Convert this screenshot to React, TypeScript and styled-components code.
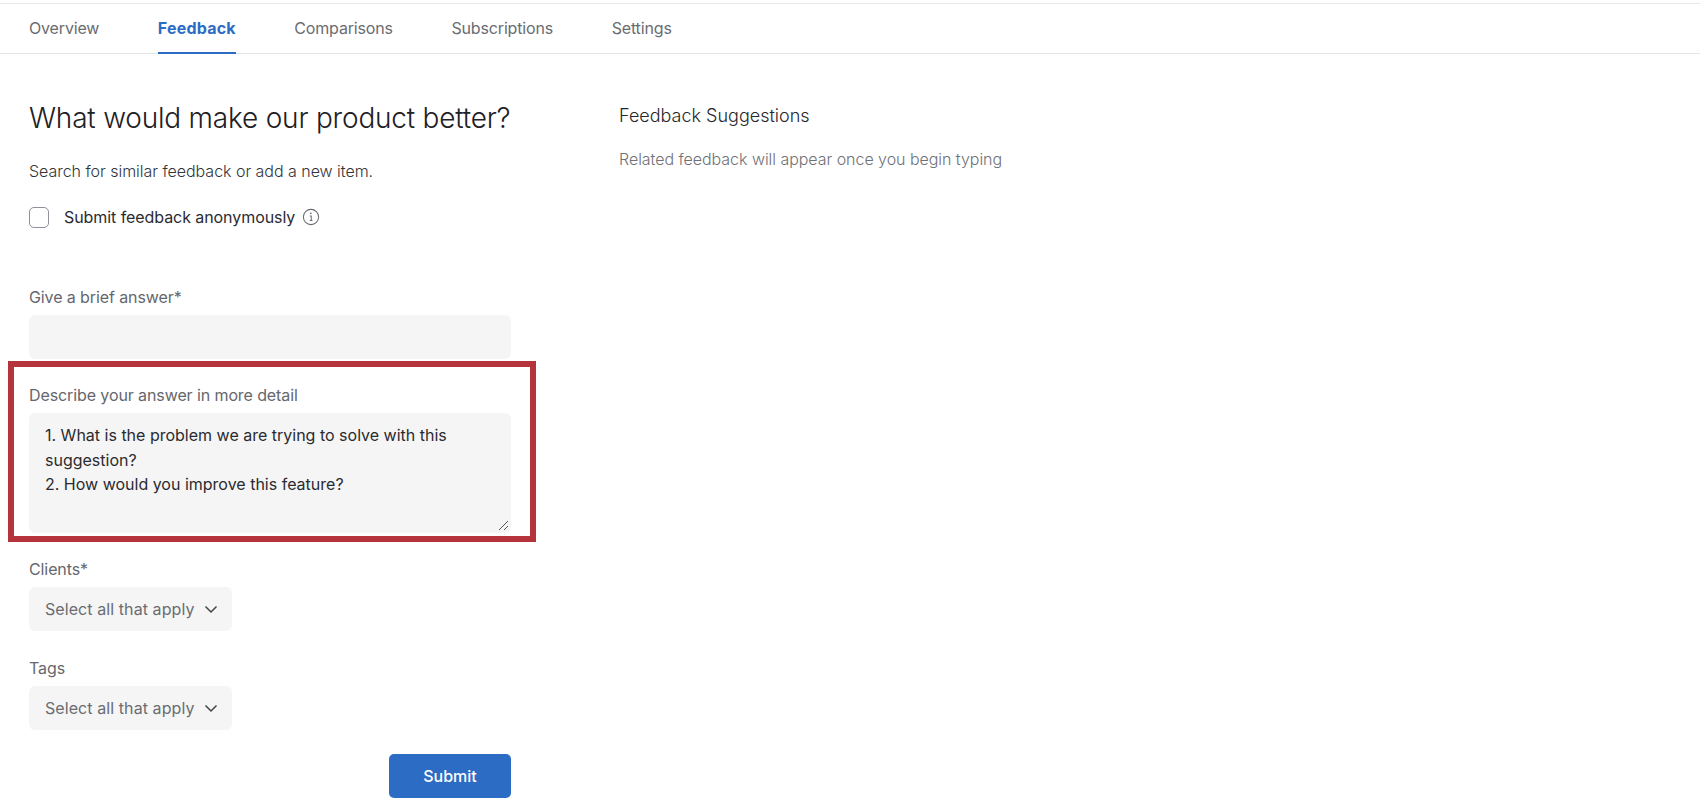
import * as React from 'react'
import styled, { createGlobalStyle } from 'styled-components'

const GlobalStyle = createGlobalStyle`
  html, body {
    margin: 0;
    padding: 0;
    background: #fff;
    font-family: 'Inter', 'Noto Sans', sans-serif;
  }
  * { box-sizing: border-box; }
`

const Page = styled.div`
  width: 1700px;
  height: 808px;
  overflow: hidden;
  padding-top: 3px;
`

const Tabs = styled.nav`
  display: flex;
  gap: 58.5px;
  height: 51px;
  padding-left: 29px;
  border-top: 1px solid #e8e8e8;
  border-bottom: 1px solid #e3e4e6;
`

const Tab = styled.a<{ $active?: boolean }>`
  display: block;
  height: 50px;
  padding-top: 14px;
  font-size: 16px;
  line-height: 20px;
  letter-spacing: ${p => (p.$active ? '0.2px' : '-0.15px')};
  font-weight: ${p => (p.$active ? 700 : 400)};
  color: ${p => (p.$active ? '#2d6cc4' : '#6a6c72')};
  border-bottom: 2px solid ${p => (p.$active ? '#2d6cc4' : 'transparent')};
`

const Columns = styled.main`
  display: flex;
  padding: 0 0 0 29px;
`

const FormColumn = styled.section`
  width: 482px;
  margin-right: 108px;
  padding-top: 46px;
`

const SideColumn = styled.aside`
  padding-top: 50px;
`

const Heading = styled.h1`
  margin: 0;
  font-size: 28px;
  line-height: 36px;
  font-weight: 300;
  letter-spacing: -0.2px;
  color: #1f2024;
  white-space: nowrap;
`

const Intro = styled.p`
  margin: 24px 0 0;
  font-size: 16px;
  line-height: 22px;
  letter-spacing: -0.03px;
  font-weight: 300;
  color: #32343a;
`

const CheckRow = styled.label`
  display: flex;
  align-items: center;
  margin-top: 24px;
  height: 22px;
  font-size: 16px;
  letter-spacing: -0.07px;
  color: #2a2b30;
`

const Checkbox = styled.span`
  width: 20px;
  height: 21px;
  margin-right: 15px;
  border: 1.5px solid #8e9199;
  border-radius: 5px;
`

const InfoIcon = styled.svg`
  margin-left: 7px;
  width: 18px;
  height: 18px;
`

const Field = styled.div<{ $top: number }>`
  position: relative;
  margin-top: ${p => p.$top}px;
`

const Label = styled.div`
  font-size: 16px;
  line-height: 20px;
  letter-spacing: -0.1px;
  color: #65676d;
  margin-bottom: 8px;
`

const TextInput = styled.div`
  height: 44px;
  background: #f5f5f5;
  border-radius: 6px;
`

const TextArea = styled.div`
  position: relative;
  height: 120px;
  padding: 10px 16px;
  background: #f5f5f5;
  border-radius: 6px;
  font-size: 16px;
  line-height: 24.5px;
  letter-spacing: 0;
  color: #2a2b30;
  white-space: pre-line;
`

const Grip = styled.svg`
  position: absolute;
  right: 2px;
  bottom: 2px;
  width: 11px;
  height: 11px;
`

// red annotation drawn on top of the screenshot
const Highlight = styled.div`
  position: absolute;
  left: -21px;
  right: -25px;
  top: -24px;
  bottom: -9px;
  border: 6px solid #b5333a;
  pointer-events: none;
`

const Select = styled.div`
  display: inline-flex;
  align-items: center;
  width: 203px;
  height: 44px;
  padding: 0 14px 0 16px;
  background: #f5f5f5;
  border-radius: 6px;
  font-size: 16px;
  letter-spacing: 0.08px;
  color: #6a6c72;
  white-space: nowrap;
  justify-content: space-between;
`

const Actions = styled.div`
  display: flex;
  justify-content: flex-end;
  margin-top: 24px;
`

const SubmitButton = styled.button`
  width: 122px;
  height: 44px;
  border: 0;
  border-radius: 5px;
  background: #2d6cc4;
  color: #fff;
  font: 500 16px 'Inter', sans-serif;
  letter-spacing: 0;
`

const SideTitle = styled.h2`
  margin: 0;
  font-size: 18px;
  line-height: 24px;
  font-weight: 300;
  letter-spacing: 0;
  color: #26272b;
`

const SideHint = styled.p`
  margin: 20px 0 0;
  font-size: 16px;
  line-height: 22px;
  font-weight: 300;
  letter-spacing: -0.04px;
  color: #6f7177;
`

const Chevron = () => (
  <svg width="14" height="14" viewBox="0 0 14 14" fill="none">
    <path d="M1.5 4.5 7 10l5.5-5.5" stroke="#404247" strokeWidth="1.5" />
  </svg>
)

const tabs = ['Overview', 'Feedback', 'Comparisons', 'Subscriptions', 'Settings']

export default function App() {
  return (
    <Page>
      <GlobalStyle />
      <Tabs>
        {tabs.map(t => (
          <Tab key={t} $active={t === 'Feedback'}>
            {t}
          </Tab>
        ))}
      </Tabs>
      <Columns>
        <FormColumn>
          <Heading>What would make our product better?</Heading>
          <Intro>Search for similar feedback or add a new item.</Intro>
          <CheckRow>
            <Checkbox />
            Submit feedback anonymously
            <InfoIcon viewBox="0 0 17 17" fill="none">
              <circle cx="8.5" cy="8.5" r="7.2" stroke="#6a6c72" />
              <path d="M7.4 7.6h1.3v4M7.3 11.8h2.6" stroke="#6a6c72" />
              <circle cx="8.4" cy="5" r=".8" fill="#6a6c72" />
            </InfoIcon>
          </CheckRow>
          <Field $top={59}>
            <Label>Give a brief answer*</Label>
            <TextInput />
          </Field>
          <Field $top={26}>
            <Highlight />
            <Label>Describe your answer in more detail</Label>
            <TextArea>
              {'1. What is the problem we are trying to solve with this\nsuggestion?\n2. How would you improve this feature?'}
              <Grip viewBox="0 0 11 11" fill="none">
                <path d="M1 10 10 1M6 10l4-4" stroke="#55575c" />
              </Grip>
            </TextArea>
          </Field>
          <Field $top={26}>
            <Label>Clients*</Label>
            <Select>
              Select all that apply
              <Chevron />
            </Select>
          </Field>
          <Field $top={27}>
            <Label>Tags</Label>
            <Select>
              Select all that apply
              <Chevron />
            </Select>
          </Field>
          <Actions>
            <SubmitButton>Submit</SubmitButton>
          </Actions>
        </FormColumn>
        <SideColumn>
          <SideTitle>Feedback Suggestions</SideTitle>
          <SideHint>Related feedback will appear once you begin typing</SideHint>
        </SideColumn>
      </Columns>
    </Page>
  )
}
